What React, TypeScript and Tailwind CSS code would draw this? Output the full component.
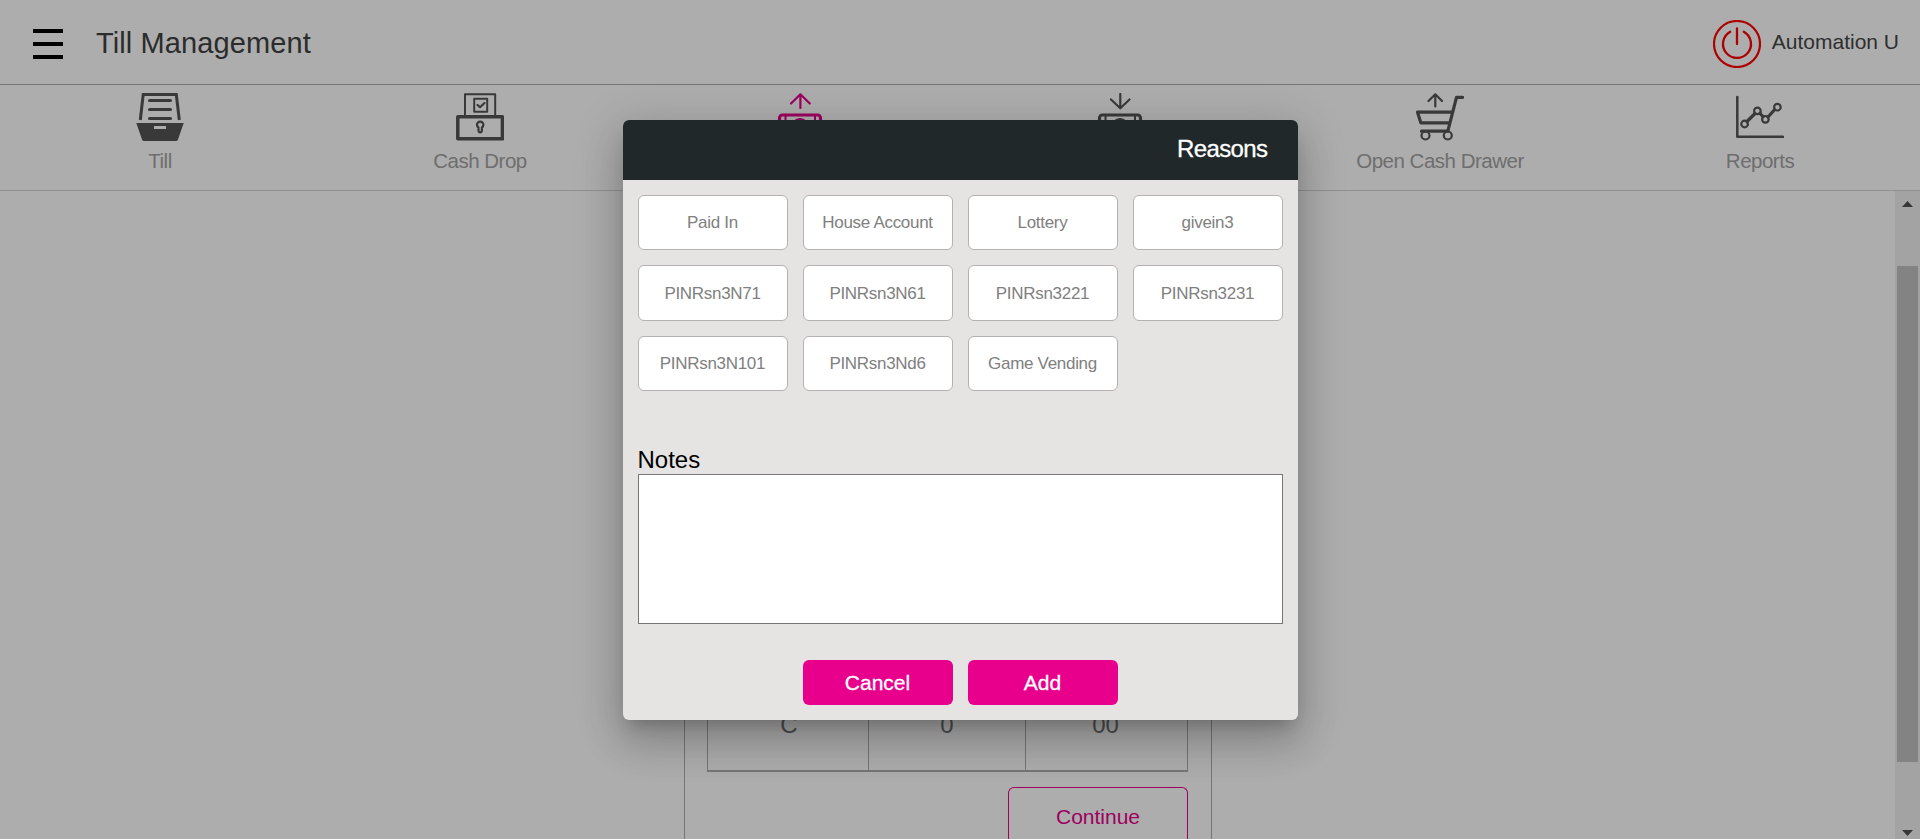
import type { ReactNode } from "react";

const reasons = [
  "Paid In",
  "House Account",
  "Lottery",
  "givein3",
  "PINRsn3N71",
  "PINRsn3N61",
  "PINRsn3221",
  "PINRsn3231",
  "PINRsn3N101",
  "PINRsn3Nd6",
  "Game Vending",
];

function Icon({ children, className = "" }: { children: ReactNode; className?: string }) {
  return (
    <svg
      viewBox="0 0 48 48"
      fill="none"
      stroke="currentColor"
      strokeLinecap="round"
      strokeLinejoin="round"
      className={`size-12 shrink-0 ${className}`}
    >
      {children}
    </svg>
  );
}

function TillIcon() {
  return (
    <Icon>
      <path d="M4.3 27 7.2 1.5H40.3L43.3 27" strokeWidth="3" strokeLinecap="butt" strokeLinejoin="miter" />
      <path d="M13.5 7.5H34.5M13.5 16.5H34.5M13.5 25.5H34.5" strokeWidth="3" />
      <path
        d="M0.3 30H47.7L42 46.5Q41.5 48 40 48H8Q6.5 48 6 46.5ZM18 33V36H30V33Z"
        fill="currentColor"
        fillRule="evenodd"
        stroke="none"
      />
    </Icon>
  );
}

function CashDropIcon() {
  return (
    <Icon>
      <path d="M9 22V1.2H39.2V22" strokeWidth="2" />
      <rect x="18.2" y="5.7" width="13" height="13" strokeWidth="2" />
      <path d="M21.5 12 24 14.2 28.5 10" strokeWidth="2.2" />
      <rect x="1.8" y="23.8" width="44.6" height="22" strokeWidth="3.5" />
      <path d="M22.5 34.5A3.2 3.2 0 1 1 25.9 34.5V37.6A1.7 1.7 0 0 1 22.5 37.6Z" strokeWidth="2.2" />
    </Icon>
  );
}

function CashIcon({ direction }: { direction: "up" | "down" }) {
  return (
    <Icon>
      <path
        d={direction === "up" ? "M24.4 15V1.5M15 10.5 24.4 1.3 33.8 10.5" : "M24.3 1V15M15 6.5 24.3 15.3 33.5 6.5"}
        strokeWidth="2.2"
      />
      <rect x="3.5" y="22" width="41" height="24.5" rx="3" strokeWidth="3.2" />
      <path d="M9.5 23V46M39 23V46" strokeWidth="2" />
      <circle cx="24" cy="34" r="8" strokeWidth="2" />
    </Icon>
  );
}

function CartIcon() {
  return (
    <Icon>
      <path d="M19.3 13.5V1.5M12.5 8 19.3 1.3 26 8" strokeWidth="2.2" />
      <path d="M46.5 4.3H40.5L31.8 38.2H5.5" strokeWidth="3.2" />
      <path d="M36.5 19.2H1.5L4.8 29.8H33" strokeWidth="3.2" />
      <circle cx="9.5" cy="42.5" r="4" strokeWidth="2.2" />
      <circle cx="31.8" cy="42.5" r="4" strokeWidth="2.2" />
    </Icon>
  );
}

function ReportsIcon() {
  return (
    <Icon>
      <path d="M1.3 4V43.8H47" strokeWidth="2.5" />
      <path d="M11 28.5 19 20.5M24 20.3 27 23.7M32 24 38.5 16.8" strokeWidth="3.2" />
      <circle cx="8.6" cy="31" r="3.3" strokeWidth="2.2" />
      <circle cx="21.4" cy="17.9" r="3.3" strokeWidth="2.2" />
      <circle cx="29.4" cy="26.3" r="3.3" strokeWidth="2.2" />
      <circle cx="41.4" cy="14.2" r="3.3" strokeWidth="2.2" />
    </Icon>
  );
}

function PowerIcon() {
  return (
    <Icon className="text-[#ff0000]">
      <circle cx="24" cy="24" r="23" strokeWidth="2.2" />
      <path d="M17.2 11.7A14 14 0 1 0 30.8 11.7M24 8.5V24" strokeWidth="2.3" />
    </Icon>
  );
}

const tabs = [
  { label: "Till", icon: <TillIcon /> },
  { label: "Cash Drop", icon: <CashDropIcon /> },
  { label: "Cash In", icon: <CashIcon direction="up" />, active: true },
  { label: "Cash Out", icon: <CashIcon direction="down" /> },
  { label: "Open Cash Drawer", icon: <CartIcon /> },
  { label: "Reports", icon: <ReportsIcon /> },
];

function Header() {
  return (
    <header className="flex h-[85px] shrink-0 items-center border-b border-[#afafaf] pr-[21px] pl-[33px]">
      <button className="mt-1 flex flex-col gap-[9px]" aria-label="Menu">
        <span className="h-1 w-[30px] bg-black" />
        <span className="h-1 w-[30px] bg-black" />
        <span className="h-1 w-[30px] bg-black" />
      </button>
      <h1 className="mt-[3px] ml-[33px] text-[29px] tracking-[0.1px] text-[#414141]">Till Management</h1>
      <div className="mt-1 ml-auto flex items-center gap-[11px]">
        <PowerIcon />
        <span className="mb-1 text-[21px] text-[#464646]">Automation U</span>
      </div>
    </header>
  );
}

function Tabs() {
  return (
    <nav className="grid h-[106px] shrink-0 grid-cols-6 border-b border-[#d6d6d6] pt-2">
      {tabs.map((tab) => (
        <div key={tab.label} className={`flex flex-col items-center ${tab.active ? "text-[#e8008c]" : "text-[#555555]"}`}>
          {tab.icon}
          <span
            className={`mt-[5px] text-[20.5px] leading-[30px] tracking-[-0.5px] ${tab.active ? "" : "text-[#a3a3a3]"}`}
          >
            {tab.label}
          </span>
        </div>
      ))}
    </nav>
  );
}

function Scrollbar() {
  return (
    <div className="flex w-[25px] shrink-0 flex-col items-center bg-[#f1f1f1] pt-[10px] pb-[3px]">
      <svg viewBox="0 0 11 6" className="h-1.5 w-[11px]" fill="#505050">
        <path d="M0 6 5.5 0 11 6Z" />
      </svg>
      <div className="mt-[59px] h-[496px] w-[21px] bg-[#c1c1c1]" />
      <svg viewBox="0 0 11 6" className="mt-auto h-1.5 w-[11px]" fill="#505050">
        <path d="M0 0 5.5 6 11 0Z" />
      </svg>
    </div>
  );
}

function Keypad() {
  const cell = "flex items-center justify-center border-[#afafaf] pt-0.5";
  return (
    <div className="flex h-full flex-1 justify-center">
      <section className="flex w-[528px] flex-col justify-end border-x border-[#afafaf] pr-[23px] pl-[22px]">
        <div className="grid h-[95px] shrink-0 grid-cols-[161px_157px_1fr] border-x border-b-2 border-[#afafaf] text-2xl text-[#757575]">
          <div className={`${cell} border-r pl-[3px]`}>C</div>
          <div className={`${cell} border-r pl-px`}>0</div>
          <div className={`${cell} pr-px`}>00</div>
        </div>
        <button className="mt-[15px] h-[52px] w-[180px] self-end rounded-t-md border border-b-0 border-[#e8008c] pt-[7px] pl-px text-[21px] text-[#e8008c]">
          Continue
        </button>
      </section>
    </div>
  );
}

function ReasonsDialog() {
  const action =
    "h-[45px] w-[150px] rounded-md bg-[#e8008c] pt-0.5 text-[21px] text-white [-webkit-text-stroke:0.3px_white]";
  return (
    <div
      role="dialog"
      className="flex h-[600px] w-[675px] flex-col overflow-hidden rounded-md bg-[#e5e4e2] shadow-[0_11px_15px_-7px_rgba(0,0,0,0.2),0_24px_38px_3px_rgba(0,0,0,0.14),0_9px_46px_8px_rgba(0,0,0,0.12)]"
    >
      <div className="flex h-[60px] shrink-0 items-center justify-end bg-[#20282a] pr-[30px] pb-0.5">
        <h2 className="text-2xl tracking-[-0.6px] text-white [-webkit-text-stroke:0.3px_white]">Reasons</h2>
      </div>
      <div className="grid grid-cols-[repeat(4,150px)] grid-rows-[55px_56px_55px] gap-x-[15px] gap-y-[15px] px-[15px] pt-[15px]">
        {reasons.map((reason) => (
          <button
            key={reason}
            className="rounded-md border border-[#b3b1b1] bg-white pt-0.5 text-[17px] tracking-[-0.3px] text-[#808080]"
          >
            {reason}
          </button>
        ))}
      </div>
      <label className="mt-[54px] ml-[15px] text-2xl leading-[29px] text-black">Notes</label>
      <textarea className="mx-[15px] h-[150px] shrink-0 resize-none border border-[#767676] bg-white" />
      <div className="mt-9 flex justify-center gap-[15px]">
        <button className={action}>Cancel</button>
        <button className={action}>Add</button>
      </div>
    </div>
  );
}

export default function App() {
  return (
    <div className="relative h-[839px] w-full overflow-hidden bg-white font-['Liberation_Sans',Arial,sans-serif]">
      <div className="flex h-full flex-col">
        <Header />
        <Tabs />
        <main className="flex min-h-0 flex-1">
          <Keypad />
          <Scrollbar />
        </main>
      </div>
      <div className="absolute inset-0 flex items-center justify-center bg-black/32">
        <ReasonsDialog />
      </div>
    </div>
  );
}
